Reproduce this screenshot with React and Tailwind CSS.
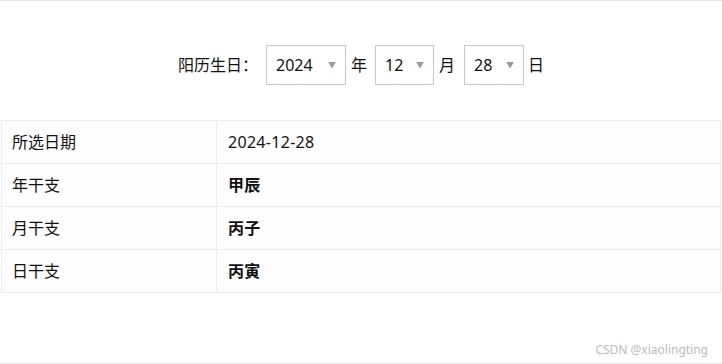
const font = { fontFamily: '"Noto Sans", "Noto Sans CJK SC", sans-serif' };

const Select = ({ value, width }) => (
  <div
    className={`flex h-[40px] items-center justify-between border border-[#c8c8c8] bg-white pl-[9px] pr-[9px] ${width}`}
  >
    <span className="text-[16px] text-[#111]">{value}</span>
    <span className="text-[8px] text-[#999]">▼</span>
  </div>
);

const rows = [
  ["所选日期", "2024-12-28", false],
  ["年干支", "甲辰", true],
  ["月干支", "丙子", true],
  ["日干支", "丙寅", true],
];

export default function App() {
  return (
    <div
      className="relative h-[364px] w-[722px] border-t border-b border-[#e6e6e6] bg-white text-[#111]"
      style={font}
    >
      <div className="flex items-center pt-[44px] pl-[178px] text-[16px]">
        <span className="mr-[8px]">阳历生日：</span>
        <Select value="2024" width="w-[80px]" />
        <span className="ml-[5px] mr-[8px]">年</span>
        <Select value="12" width="w-[59px]" />
        <span className="ml-[5px] mr-[9px]">月</span>
        <Select value="28" width="w-[60px]" />
        <span className="ml-[4px]">日</span>
      </div>

      <div className="mt-[35px] ml-[1px] w-[720px] border-t border-l border-r border-[#ececec] bg-[#fdfdfd] text-[16px]">
        {rows.map(([k, v, bold]) => (
          <div key={k} className="flex h-[43px] items-center border-b border-[#ececec]">
            <div className="flex h-full w-[215px] items-center border-r border-[#ececec] pl-[10px]">
              {k}
            </div>
            <div className={`pl-[11px] tracking-[0.3px] ${bold ? "font-bold" : ""}`}>{v}</div>
          </div>
        ))}
      </div>

      <div className="absolute right-[14px] bottom-[4px] text-[12px] text-[#bbb]">
        CSDN @xiaolingting
      </div>
    </div>
  );
}
